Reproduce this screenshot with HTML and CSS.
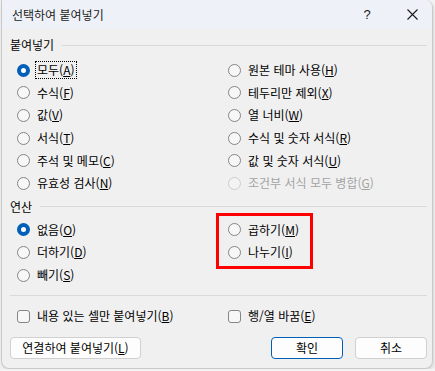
FILE: index.html
```html
<!DOCTYPE html>
<html lang="ko">
<head>
    <meta charset="UTF-8">
    <title>선택하여 붙여넣기</title>
    <link rel="stylesheet" href="styles.css">
</head>
<body>
    <div class="dialog">
        <div class="titlebar">
            <span class="title">선택하여 붙여넣기</span>
            <span class="help">?</span>
            <span class="close">
                <svg width="11" height="11" viewBox="0 0 11 11"><path d="M0.5 0.5 L10.5 10.5 M10.5 0.5 L0.5 10.5" stroke="#1a1a1a" stroke-width="1.1" fill="none"/></svg>
            </span>
        </div>

        <div class="content">
            <div class="group-head">
                <span>붙여넣기</span>
                <div class="rule"></div>
            </div>
            <div class="options paste">
                <label class="opt"><span class="radio checked"></span><span class="focus">모두(<u>A</u>)</span></label>
                <label class="opt"><span class="radio"></span>원본 테마 사용(<u>H</u>)</label>
                <label class="opt"><span class="radio"></span>수식(<u>F</u>)</label>
                <label class="opt"><span class="radio"></span>테두리만 제외(<u>X</u>)</label>
                <label class="opt"><span class="radio"></span>값(<u>V</u>)</label>
                <label class="opt"><span class="radio"></span>열 너비(<u>W</u>)</label>
                <label class="opt"><span class="radio"></span>서식(<u>T</u>)</label>
                <label class="opt"><span class="radio"></span>수식 및 숫자 서식(<u>R</u>)</label>
                <label class="opt"><span class="radio"></span>주석 및 메모(<u>C</u>)</label>
                <label class="opt"><span class="radio"></span>값 및 숫자 서식(<u>U</u>)</label>
                <label class="opt"><span class="radio"></span>유효성 검사(<u>N</u>)</label>
                <label class="opt disabled"><span class="radio"></span>조건부 서식 모두 병합(<u>G</u>)</label>
            </div>

            <div class="group-head ops-head">
                <span>연산</span>
                <div class="rule"></div>
            </div>
            <div class="options ops">
                <label class="opt"><span class="radio checked"></span>없음(<u>O</u>)</label>
                <label class="opt"><span class="radio"></span>곱하기(<u>M</u>)</label>
                <label class="opt"><span class="radio"></span>더하기(<u>D</u>)</label>
                <label class="opt"><span class="radio"></span>나누기(<u>I</u>)</label>
                <label class="opt"><span class="radio"></span>빼기(<u>S</u>)</label>
                <div class="highlight"></div>
            </div>

            <div class="rule full"></div>

            <div class="options checks">
                <label class="opt"><span class="check"></span>내용 있는 셀만 붙여넣기(<u>B</u>)</label>
                <label class="opt"><span class="check"></span>행/열 바꿈(<u>E</u>)</label>
            </div>

            <div class="buttons">
                <button class="btn link">연결하여 붙여넣기(<u>L</u>)</button>
                <span class="spacer"></span>
                <button class="btn primary">확인</button>
                <button class="btn">취소</button>
            </div>
        </div>
    </div>
</body>
</html>
```

FILE: styles.css
```css
body {
    margin: 0;
    background-color: #f3f3f3;
    font-family: "Noto Sans CJK KR", "Noto Sans", sans-serif;
    font-size: 12px;
    color: #000000;
}

.dialog {
    box-sizing: border-box;
    width: 432px;
    height: 369px;
    margin-left: 1px;
    background-color: #f0f0f0;
    border: 1px solid #c9c9c9;
    border-top: none;
    border-radius: 0 8px 8px 8px;
    box-shadow: 1px 2px 4px rgba(0, 0, 0, 0.12);
    overflow: hidden;
}

/* --- Title bar --- */
.titlebar {
    display: flex;
    align-items: center;
    height: 29px;
    background-color: #eef2f8;
    padding-left: 10px;
}

.title {
    flex: 1;
    color: #1a1a1a;
    line-height: 29px;
}

.help {
    width: 14px;
    margin-right: 33px;
    text-align: center;
    font-family: "Liberation Sans", sans-serif;
    font-size: 13px;
    color: #1a1a1a;
}

.close {
    display: flex;
    margin-right: 14px;
}

/* --- Content --- */
.content {
    padding: 8px 5px 0 8px;
}

.group-head {
    display: flex;
    align-items: center;
    height: 16px;
    line-height: 16px;
}

.group-head span {
    margin-right: 8px;
}

.rule {
    flex: 1;
    height: 1px;
    background-color: #d9d9d9;
}

.rule.full {
    flex: none;
    margin-top: 9px;
}

.options {
    display: grid;
    grid-template-columns: 211px 1fr;
    grid-auto-rows: 22.6px;
    padding-left: 7px;
    margin-top: 6px;
}

.ops-head {
    margin-top: 4px;
}

.ops {
    position: relative;
    margin-top: 4px;
}

.opt {
    display: flex;
    align-items: center;
    line-height: 16px;
    white-space: nowrap;
}

.opt u {
    text-underline-offset: 1px;
}

.radio {
    box-sizing: border-box;
    width: 13px;
    height: 13px;
    margin-right: 7px;
    border: 1px solid #858585;
    border-radius: 50%;
    background-color: #f7f7f7;
    flex: none;
}

.radio.checked {
    border: 4px solid #005fb8;
    background-color: #ffffff;
}

.disabled {
    color: #a3a3a3;
}

.disabled .radio {
    border-color: #cdcdcd;
    background-color: #f3f3f3;
}

.focus {
    outline: 1px dotted #000000;
    outline-offset: 0;
    padding: 0 1px;
    margin-left: -1px;
}

/* annotation box round 곱하기 / 나누기 */
.highlight {
    position: absolute;
    left: 206px;
    top: -6px;
    width: 91px;
    height: 50px;
    border: 3px solid #ff0000;
}

.checks {
    margin-top: 10px;
    grid-auto-rows: 20px;
}

.check {
    box-sizing: border-box;
    width: 13px;
    height: 13px;
    margin-right: 7px;
    border: 1px solid #858585;
    border-radius: 3px;
    background-color: #f7f7f7;
    flex: none;
}

/* --- Buttons --- */
.buttons {
    display: flex;
    margin-top: 11px;
}

.spacer {
    flex: 1;
}

.btn {
    box-sizing: border-box;
    height: 22px;
    padding: 0;
    font-family: inherit;
    font-size: 12px;
    line-height: 18px;
    color: #000000;
    background-color: #fdfdfd;
    border: 1px solid #d0d0d0;
    border-radius: 4px;
    width: 72px;
    margin-left: 12px;
}

.btn.link {
    width: 131px;
    margin-left: 0;
}

.btn.primary {
    border-color: #005fb8;
    margin-left: 0;
}
```
